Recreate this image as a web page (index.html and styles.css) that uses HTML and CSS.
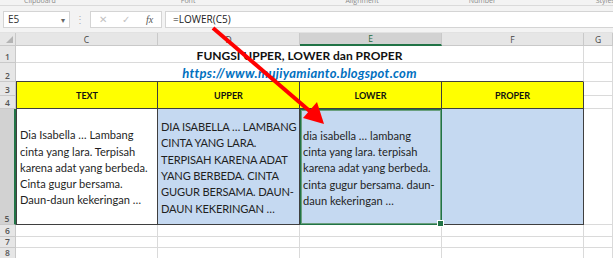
FILE: index.html
```html
<!DOCTYPE html>
<html lang="en">
<head>
    <meta charset="UTF-8">
    <meta name="viewport" content="width=device-width, initial-scale=1.0">
    <title>FUNGSI UPPER, LOWER dan PROPER</title>
    <link rel="stylesheet" href="styles.css">
</head>
<body>
    <div class="ribbon">
        <span class="grp g-clip">Clipboard</span>
        <span class="grp g-font">Font</span>
        <span class="grp g-align">Alignment</span>
        <span class="grp g-num">Number</span>
        <span class="grp g-style">Styles</span>
    </div>

    <div class="formula-bar">
        <div class="name-box">E5<span class="caret">▾</span></div>
        <div class="fb-sep">⋮</div>
        <div class="fb-buttons">
            <span class="fb-btn">✕</span>
            <span class="fb-btn">✓</span>
            <span class="fb-btn fx">fx</span>
        </div>
        <div class="fb-input">=LOWER(C5)</div>
    </div>

    <div class="sheet">
        <!-- column headers -->
        <div class="hdr corner"><span class="tri"></span></div>
        <div class="hdr col">C</div>
        <div class="hdr col">D</div>
        <div class="hdr col sel-col">E</div>
        <div class="hdr col">F</div>
        <div class="hdr col">G</div>

        <!-- row 1 -->
        <div class="hdr row">1</div>
        <div class="cell title">FUNGSI UPPER, LOWER dan PROPER</div>
        <div class="cell"></div>

        <!-- row 2 -->
        <div class="hdr row">2</div>
        <div class="cell link">https://www.mujiyamianto.blogspot.com</div>
        <div class="cell"></div>

        <!-- rows 3-4 -->
        <div class="hdr row">3</div>
        <div class="cell th first">TEXT</div>
        <div class="cell th">UPPER</div>
        <div class="cell th">LOWER</div>
        <div class="cell th">PROPER</div>
        <div class="cell"></div>
        <div class="hdr row">4</div>
        <div class="cell"></div>

        <!-- row 5 -->
        <div class="hdr row sel-row">5</div>
        <div class="cell td first">Dia Isabella … Lambang<br>cinta yang lara. Terpisah<br>karena adat yang berbeda.<br>Cinta gugur bersama.<br>Daun-daun kekeringan …</div>
        <div class="cell td blue caps">DIA ISABELLA … LAMBANG<br>CINTA YANG LARA.<br>TERPISAH KARENA ADAT<br>YANG BERBEDA. CINTA<br>GUGUR BERSAMA. DAUN-<br>DAUN KEKERINGAN …</div>
        <div class="cell td blue active">dia isabella … lambang<br>cinta yang lara. terpisah<br>karena adat yang berbeda.<br>cinta gugur bersama. daun-<br>daun kekeringan …</div>
        <div class="cell td blue"></div>
        <div class="cell"></div>

        <!-- rows 6-8 -->
        <div class="hdr row">6</div>
        <div class="cell"></div><div class="cell"></div><div class="cell"></div><div class="cell"></div><div class="cell"></div>
        <div class="hdr row">7</div>
        <div class="cell"></div><div class="cell"></div><div class="cell"></div><div class="cell"></div><div class="cell"></div>
        <div class="hdr row">8</div>
        <div class="cell"></div><div class="cell"></div><div class="cell"></div><div class="cell"></div><div class="cell"></div>
    </div>

    <svg class="arrow" width="613" height="258" viewBox="0 0 613 258">
        <line x1="213" y1="28" x2="312" y2="113" stroke="#ff0000" stroke-width="4"/>
        <polygon points="324,124 303,118 317,102" fill="#ff0000"/>
    </svg>
</body>
</html>
```

FILE: styles.css
```css
* {
    box-sizing: border-box;
}
body {
    margin: 0;
    width: 613px;
    height: 258px;
    overflow: hidden;
    background-color: #ffffff;
    font-family: "Open Sans", Arial, sans-serif;
    position: relative;
}
.ribbon {
    height: 6px;
    background-color: #f3f3f3;
    border-bottom: 1px solid #dadada;
    display: flex;
    overflow: hidden;
}
.grp {
    font-size: 7px;
    line-height: 7px;
    margin-top: -3px;
    color: #8a8a8a;
    white-space: nowrap;
}
.g-clip { margin-left: 24px; }
.g-font { margin-left: 125px; }
.g-align { margin-left: 150px; }
.g-num { margin-left: 90px; }
.g-style { margin-left: 100px; }

.formula-bar {
    height: 27px;
    background-color: #f3f3f3;
    display: flex;
    align-items: center;
    padding: 0 0 0 3px;
    border-bottom: 1px solid #e2e2e2;
}
.name-box {
    width: 67px;
    height: 17px;
    background: #ffffff;
    border: 1px solid #d4d4d4;
    font-size: 10px;
    color: #333333;
    padding-left: 4px;
    display: flex;
    align-items: center;
    justify-content: space-between;
}
.caret {
    font-size: 8px;
    color: #666666;
    padding-right: 4px;
}
.fb-sep {
    width: 20px;
    text-align: center;
    font-size: 10px;
    color: #b0b0b0;
}
.fb-buttons {
    width: 72px;
    height: 17px;
    background: #ffffff;
    border: 1px solid #d4d4d4;
    display: flex;
    align-items: center;
    justify-content: space-around;
    font-size: 10px;
    color: #c2c2c2;
}
.fb-btn.fx {
    color: #555555;
    font-family: "Liberation Serif", serif;
    font-style: italic;
    font-size: 10px;
}
.fb-input {
    flex: 1;
    height: 17px;
    margin-left: 3px;
    background: #ffffff;
    border: 1px solid #d4d4d4;
    border-right: none;
    font-size: 10px;
    color: #222222;
    padding-left: 7px;
    display: flex;
    align-items: center;
}

.sheet {
    display: grid;
    grid-template-columns: 16px 142px 142px 142px 142px 29px;
    grid-template-rows: 13px 17px 19px 14px 13px 116px 12px 11px 11px;
}
.hdr {
    background-color: #e6e6e6;
    border-right: 1px solid #c9c9c9;
    border-bottom: 1px solid #c9c9c9;
    font-size: 8.5px;
    color: #444444;
    display: flex;
    justify-content: center;
}
.hdr.col {
    align-items: center;
}
.hdr.row {
    align-items: flex-end;
    line-height: 10px;
    font-weight: 600;
    color: #555555;
}
.corner {
    position: relative;
}
.tri {
    position: absolute;
    right: 2px;
    bottom: 2px;
    width: 0;
    height: 0;
    border-left: 7px solid transparent;
    border-bottom: 7px solid #b4b4b4;
}
.sel-col {
    background-color: #d2d2d2;
    border-bottom: 2px solid #217346;
    color: #1e6b40;
}
.sel-row {
    background-color: #d2d2d2;
    border-right: 2px solid #217346;
    color: #1e6b40;
}

.cell {
    border-right: 1px solid #dadada;
    border-bottom: 1px solid #dadada;
    font-family: "Lato", "Liberation Sans", sans-serif;
    color: #111111;
}
.title {
    grid-column: span 4;
    font-weight: bold;
    font-size: 12px;
    line-height: 13px;
    display: flex;
    align-items: flex-end;
    justify-content: center;
}
.link {
    grid-column: span 4;
    font-weight: bold;
    font-style: italic;
    font-size: 13px;
    color: #0070c0;
    line-height: 15px;
    display: flex;
    align-items: flex-end;
    justify-content: center;
    border-bottom: 1px solid #3f3f3f;
    letter-spacing: 0.3px;
}
.th {
    grid-row: span 2;
    background-color: #ffff00;
    border-right: 1px solid #3f3f3f;
    border-bottom: 1px solid #3f3f3f;
    font-size: 9px;
    font-weight: bold;
    display: flex;
    align-items: center;
    justify-content: center;
}
.td {
    border-right: 1px solid #3f3f3f;
    border-bottom: 1px solid #3f3f3f;
    font-size: 11.1px;
    line-height: 16.3px;
    padding: 3px 0 0 3px;
    display: flex;
    align-items: center;
    white-space: nowrap;
    color: #1f1f1f;
}
.caps {
    letter-spacing: -0.15px;
}
.first {
    border-left: 1px solid #3f3f3f;
}
.blue {
    background-color: #c5d9f1;
}
.active {
    position: relative;
    border: 1px solid #217346;
    box-shadow: inset 0 0 0 1px #6aa07e;
    padding-left: 2px;
}
.active::after {
    content: "";
    position: absolute;
    right: -3px;
    bottom: -3px;
    width: 5px;
    height: 5px;
    background-color: #217346;
    border: 1px solid #ffffff;
}

.arrow {
    position: absolute;
    left: 0;
    top: 0;
    pointer-events: none;
}
```
